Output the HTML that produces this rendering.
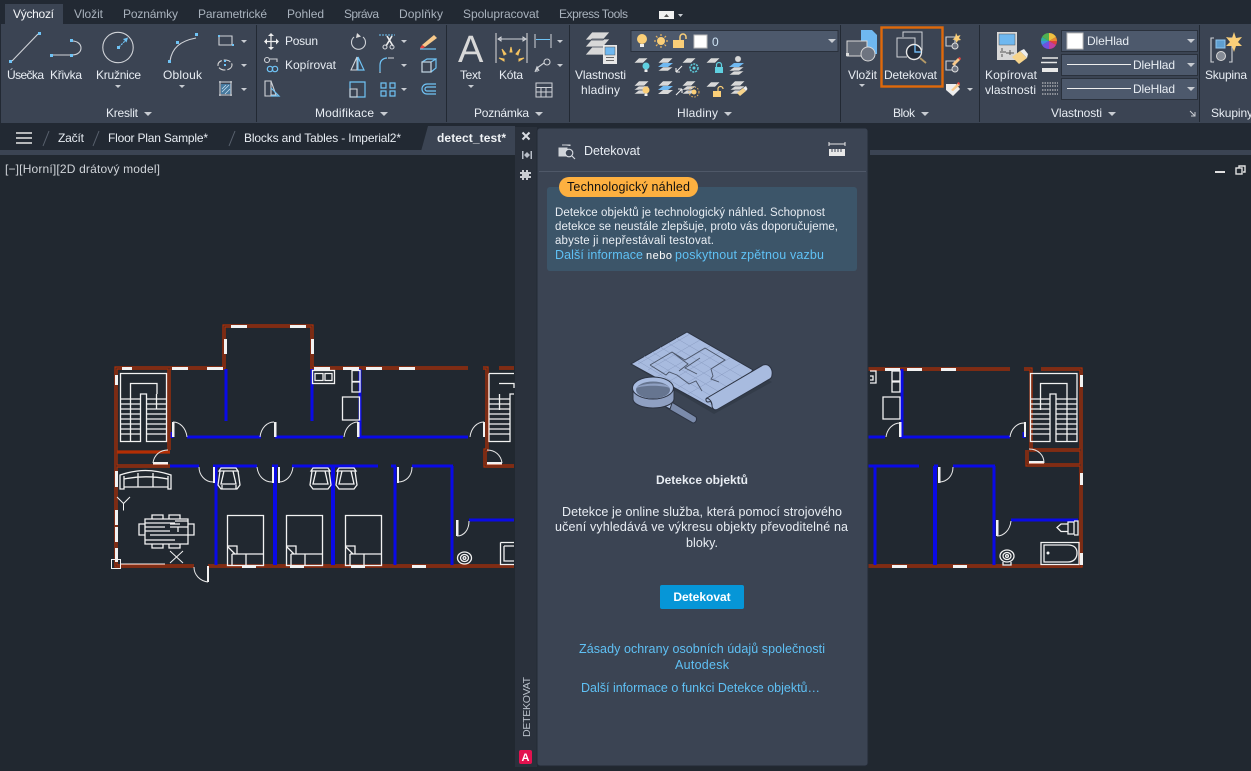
<!DOCTYPE html>
<html><head><meta charset="utf-8"><title>AutoCAD</title>
<style>
html,body{margin:0;padding:0;width:1251px;height:771px;overflow:hidden;background:#212830}
svg{display:block;font-family:"Liberation Sans",sans-serif}
text{font-size:12px;fill:#e8edf3}
.t{fill:#a9b2bd}
.l{fill:#5fc1f5;font-size:12.5px}
.i{fill:none;stroke:#d0d3d8;stroke-width:1.1}
.b{fill:none;stroke:#6fc3f5;stroke-width:1.2}
.a{fill:#c8ccd2}
.s{fill:#6fc3f5}
.d{fill:none;stroke:#e8e8e8;stroke-width:1}
.m{font-size:12.5px}
.n{font-size:11.5px}
</style></head><body>
<svg width="1251" height="771" viewBox="0 0 1251 771" xmlns="http://www.w3.org/2000/svg">
<rect width="1251" height="771" fill="#212830"/>
<rect width="1251" height="24" fill="#222933"/>
<rect y="24" width="1251" height="99" fill="#3b4453"/>
<rect y="123" width="1251" height="27" fill="#222933"/>
<rect y="150" width="423" height="5" fill="#3b4453"/>
<rect x="870" y="150" width="381" height="5" fill="#3b4453"/>
<!-- main tabs -->
<rect x="5" y="4" width="58" height="20" fill="#3b4453"/>
<text x="13" y="18" textLength="41" style="fill:#f4f6f8">Výchozí</text>
<text class="t" x="74" y="18" textLength="29">Vložit</text>
<text class="t" x="123" y="18" textLength="55">Poznámky</text>
<text class="t" x="198" y="18" textLength="69">Parametrické</text>
<text class="t" x="287" y="18" textLength="37">Pohled</text>
<text class="t" x="344" y="18" textLength="35">Správa</text>
<text class="t" x="399" y="18" textLength="44">Doplňky</text>
<text class="t" x="463" y="18" textLength="76">Spolupracovat</text>
<text class="t" x="559" y="18" textLength="69">Express Tools</text>
<rect x="659" y="11" width="15" height="8" fill="#f0f0f0"/><path d="M664 17l2.500-3 2.500 3z" fill="#555"/><path d="M678 14h5l-2.500 3z" class="a"/>
<!-- separators -->
<g fill="#222933"><rect x="256" y="25" width="1" height="97"/><rect x="446" y="25" width="1" height="97"/><rect x="569" y="25" width="1" height="97"/><rect x="840" y="25" width="1" height="97"/><rect x="979" y="25" width="1" height="97"/><rect x="1199" y="25" width="1" height="97"/></g>
<rect x="0" y="24" width="1" height="99" fill="#222933"/>
<!-- Kreslit -->
<path d="M12 61L38 34" class="i"/><rect x="9" y="60" width="3" height="3" class="s"/><rect x="38" y="32" width="3" height="3" class="s"/>
<path d="M53 55H71M72 41c12 0 12 14 0 14" class="i"/><rect x="50" y="54" width="3" height="3" class="s"/><rect x="70" y="54" width="3" height="3" class="s"/><rect x="70" y="39" width="3" height="3" class="s"/>
<circle cx="118" cy="47.500" r="15.200" class="i"/><path d="M119 47l8-8" stroke="#6fc3f5" stroke-width="1.200" fill="none" stroke-dasharray="2 1"/><path d="M128 37.500l-5 1.500 3.500 3.500z" class="s"/><rect x="117" y="46" width="3" height="3" class="s"/>
<path d="M170 61c2-13 10-20 26-23" class="i"/><rect x="168" y="60" width="3" height="3" class="s"/><rect x="176" y="41" width="3" height="3" class="s"/><rect x="195" y="33" width="3" height="3" class="s"/>
<text x="7" y="79" textLength="37">Úsečka</text><text x="50" y="79" textLength="32">Křivka</text><text x="96" y="79" textLength="45">Kružnice</text><text x="163" y="79" textLength="39">Oblouk</text>
<path d="M115 85h6l-3 3zM179 85h6l-3 3z" class="a"/>
<path d="M219 36h13v9h-13z" class="i"/><rect x="218" y="35" width="2" height="2" class="s"/><rect x="232" y="44" width="2" height="2" class="s"/>
<ellipse cx="225" cy="65" rx="7" ry="5" fill="none" stroke="#d8d8d8" stroke-width="1.100" stroke-dasharray="7 2"/><rect x="224" y="60" width="2" height="2" class="s"/><rect x="224" y="64" width="2" height="2" class="s"/>
<rect x="221" y="84" width="10" height="10" fill="#4f9cd0" opacity=".6"/><path d="M222 92l7-7M222 89l4-4M225 94l5-5" stroke="#cfe4f5" stroke-width=".7"/><path d="M219 82h13M219 95h13M220 81v15M231 81v15" class="i"/>
<path d="M241 40h6l-3 3zM241 64h6l-3 3zM241 88h6l-3 3z" class="a"/>
<text x="106" y="117" textLength="32">Kreslit</text><path d="M144 112h8l-4 4z" class="a"/>
<!-- Modifikace -->
<path d="M271 35v13M265 41.500h13" stroke="#eee" stroke-width="1.200"/><path d="M271 33l-3 3h6zM271 50l-3-3h6zM264 41.500l3-3v6zM279 41.500l-3-3v6z" fill="#eee"/>
<text x="285" y="45" textLength="33">Posun</text><text x="285" y="69" textLength="51">Kopírovat</text>
<circle cx="267" cy="60" r="2.500" class="i"/><circle cx="270" cy="69" r="2.700" class="b"/><circle cx="275" cy="69" r="2.700" class="b"/><path d="M270 59h7v3" class="i"/>
<path d="M265 81h6v15h-6zM271 81l5 14h-5" class="i"/><path d="M271 88l8 8h-8" class="b"/>
<path d="M354 37a7 7 0 1 0 9 0" class="i"/><path d="M357 33l4 3.500-5 1.500z" fill="#ddd"/>
<path d="M351 70l6-13v13z" class="i"/><path d="M358 57l6 13h-6z" class="b"/>
<path d="M350 82h15v15h-15z" class="b"/><path d="M350 89h7v8h-7z" class="i"/>
<path d="M379 35h16" stroke="#6fc3f5" stroke-width="1" stroke-dasharray="2 1"/><path d="M387 36l6 10M392 36l-6 10" stroke="#eee" stroke-width="1.600"/><circle cx="385" cy="47" r="2" class="i"/><circle cx="392" cy="47" r="2" class="i"/>
<path d="M380 72v-7c0-5 4-7 7-7" class="b"/><path d="M388 58h6M380 72v1" class="i"/>
<path d="M381 83h5v5h-5zM390 83h5v5h-5z" class="b"/><path d="M381 91h5v5h-5zM390 91h5v5h-5z" class="b"/>
<path d="M401 40h6l-3 3zM401 64h6l-3 3zM401 88h6l-3 3z" class="a"/>
<path d="M422 45l12-10 3 3-12 9z" fill="#f7c98b"/><path d="M422 45l3 2-3 2-2-1z" fill="#e9443e"/><path d="M420 49h16" class="b"/>
<path d="M422 62h9v10h-9zM431 62l5-3v9l-5 4M422 62l5-3h9" class="b"/><path d="M422 62h9v10h-9z" class="i"/>
<path d="M436 84h-9a5 5 0 0 0 0 10h9M436 87h-9a2 2 0 0 0 0 4h9" class="b"/>
<text x="315" y="117" textLength="59">Modifikace</text><path d="M380 112h8l-4 4z" class="a"/>
<!-- Poznámka -->
<text x="458" y="62" style="font-size:38px;fill:#d8d8d8" textLength="27">A</text>
<text x="460" y="79" textLength="21">Text</text><path d="M468 85h6l-3 3z" class="a"/>
<path d="M496 33v30M527 33v30" stroke="#ddd" stroke-width="1"/><path d="M498 39h28M498 39l3-2v4zM526 39l-3-2v4z" class="i" style="stroke-width:1"/>
<path d="M511 47l1 5-2 0zM502 49l4 5-2 1zM520 49l-4 5 2 1zM499 58l5 1v2zM524 58l-5 1v2z" fill="#f5c360" stroke="#f5c360"/>
<text x="499" y="79" textLength="24">Kóta</text>
<path d="M535 34v14M551 34v14" class="i" style="stroke-width:1"/><path d="M536 39.500h14" stroke="#6fc3f5"/>
<circle cx="547" cy="62" r="3" class="i"/><path d="M544 63l-7 5v4M535 72l2-5 2 4" class="i"/>
<path d="M536 83h16v14h-16zM536 87.500h16M536 92h16M541 87v10M546 87v10" class="i" style="stroke-width:1"/>
<path d="M557 40h6l-3 3zM557 64h6l-3 3z" class="a"/>
<text x="474" y="117" textLength="55">Poznámka</text><path d="M535 112h8l-4 4z" class="a"/>
<!-- Hladiny -->
<path d="M585 40l7-8h18l-7 8zM585 47l7-8h18l-7 8zM585 55l7-8h18l-7 8z" fill="#d8d8d8" stroke="#3b4453" stroke-width=".8"/>
<rect x="603" y="45" width="14" height="19" fill="#e8e8e8"/><rect x="605" y="47" width="10" height="8" fill="#6fb8f0" stroke="#555" stroke-width=".5"/><path d="M606 57.500h8M606 60.500h8" stroke="#666"/>
<text x="575" y="79" textLength="51">Vlastnosti</text><text x="581" y="94" textLength="39">hladiny</text>
<rect x="631" y="30.500" width="207" height="21" fill="#4d596c" stroke="#2a313c"/>
<circle cx="642" cy="39" r="5" fill="#fbcf78"/><rect x="640" y="44" width="4" height="3" fill="#eee"/>
<circle cx="661" cy="41" r="4" fill="#fbcf78"/><path d="M661 34v2M661 46v2M654 41h2M666 41h2M656 36l1.500 1.500M666 36l-1.500 1.500M656 46l1.500-1.500M666 46l-1.500-1.500" stroke="#e8b560" stroke-width="1.200"/>
<rect x="673" y="40" width="11" height="8" fill="#fbcf78"/><path d="M680 40v-3a3 3 0 0 1 6 0v2" fill="none" stroke="#fbcf78" stroke-width="1.500"/>
<rect x="694" y="35" width="13" height="13" fill="#fff" stroke="#bbb"/>
<text x="712" y="46" style="fill:#cfe4f5">0</text><path d="M828 39h8l-4 4z" class="a"/>
<g fill="#d8d8d8" stroke="#3b4453" stroke-width=".5">
<path d="M634 63l5-5h9l-5 5zM682 63l5-5h9l-5 5zM706 63l5-5h9l-5 5z"/>
<path d="M658 71l5-4h10l-5 4zM658 63l5-5h10l-5 5z"/>
<path d="M634 90l5-4h10l-5 4zM634 94l5-4h10l-5 4zM634 86l5-5h10l-5 5zM658 86l5-5h10l-5 5zM682 86l5-5h9l-5 5zM706 87l5-5h9l-5 5zM730 86l5-5h10l-5 5zM730 90l5-4h10l-5 4zM730 94l5-4h10l-5 4z"/>
<path d="M682 90l5-4h9l-5 4zM682 94l5-4h9l-5 4z"/>
<path d="M729 71l5-4h10l-5 4zM729 75l5-4h10l-5 4z"/><circle cx="738" cy="59" r="3.200"/>
</g>
<path d="M658 67l5-4h10l-5 4z" fill="#6fb8f0"/><path d="M658 90l5-4h10l-5 4z" fill="#6fb8f0"/><path d="M658 94l5-4h10l-5 4z" fill="#d8d8d8"/>
<path d="M729 67l5-4h10l-5 4z" fill="#6fb8f0"/>
<circle cx="646" cy="66" r="3.500" fill="#5fd0e0"/><rect x="644.500" y="69.500" width="3" height="2.500" fill="#eee"/>
<path d="M676 72l6-6M676 72h4M676 72v-4" stroke="#eee" stroke-width="1.100" fill="none"/>
<circle cx="694" cy="68" r="4" fill="none" stroke="#5fd0e0" stroke-width="1.500" stroke-dasharray="2 1"/><circle cx="694" cy="68" r="1.500" fill="#5fd0e0"/>
<rect x="715" y="67" width="8" height="6" fill="#5fd0e0"/><path d="M716.500 67v-2a2.500 2.500 0 0 1 5 0v2" fill="none" stroke="#5fd0e0" stroke-width="1.200"/>
<circle cx="646" cy="90" r="3.500" fill="#fbcf78"/><rect x="644.500" y="93.500" width="3" height="2.500" fill="#eee"/>
<path d="M676 95l6-6M682 89h-4M682 89v4" stroke="#eee" stroke-width="1.100" fill="none"/>
<circle cx="694" cy="92" r="2.500" fill="#fbcf78"/><circle cx="694" cy="92" r="5" fill="none" stroke="#e8b560" stroke-dasharray="1.500 1.500"/>
<rect x="713" y="91" width="8" height="6" fill="#fbcf78"/><path d="M718 91v-2a2.500 2.500 0 0 1 5 0" fill="none" stroke="#fbcf78" stroke-width="1.200"/>
<path d="M737 93l6-5 3 3-6 5z" fill="#f7d48b"/><path d="M743 88l3-2 1.500 3-1.500 2z" fill="#eee"/>
<text x="677" y="117" textLength="41">Hladiny</text><path d="M724 112h8l-4 4z" class="a"/>
<!-- Blok -->
<path d="M861 30h11l5 5v19h-16z" fill="#6fb8f0"/>
<rect x="847" y="41" width="20" height="15" fill="#5f6672" stroke="#d8d8d8"/><rect x="846" y="53" width="3" height="3" fill="#ddd"/>
<circle cx="868" cy="54" r="7" fill="#6e7480" stroke="#d8d8d8"/>
<text x="848" y="79" textLength="29">Vložit</text><path d="M859 84h6l-3 3z" class="a"/>
<rect x="881.500" y="27.500" width="61" height="59" fill="none" stroke="#e0690a" stroke-width="2.400"/>
<path d="M903 37v-5h19v18h-3" class="i" style="stroke-width:1"/><path d="M907 57h-10v-19h18v6" class="i" style="stroke-width:1"/>
<circle cx="914" cy="52" r="7.500" fill="#232b38" stroke="#e8e8e8" stroke-width="1.400"/><path d="M915 45v7h6" stroke="#6fb8f0" stroke-width="1.400" fill="none"/>
<path d="M920 58l6 5" stroke="#b59a66" stroke-width="1.800"/>
<text x="884" y="79" textLength="53">Detekovat</text>
<path d="M946 37h9v9h-9z" class="i"/><circle cx="955" cy="46" r="3" fill="#6e7480" stroke="#ddd"/><path d="M956 33l1.500 3 3-1-1.500 3 2 2-3 .5-1.500 2.500-1-3-3-.5 2.500-2z" fill="#fbcf78"/>
<path d="M946 61h9v9h-9z" class="i"/><circle cx="955" cy="69" r="3" fill="#6e7480" stroke="#ddd"/><path d="M952 64l6-6 2 2-6 6z" fill="#f7c98b"/><path d="M958 58l2-1 1 2-1 1z" fill="#e9443e"/>
<path d="M946 84h10l4 5-7 7-7-6z" fill="#eee"/><path d="M951 90l7-7 2 2-7 6z" fill="#f7c98b"/><path d="M957 83l2-1 1 2-1 1z" fill="#e9443e"/>
<path d="M967 88h6l-3 3z" class="a"/>
<text x="893" y="117" textLength="22">Blok</text><path d="M921 112h8l-4 4z" class="a"/>
<!-- Vlastnosti -->
<rect x="997" y="32" width="20" height="28" fill="#d8d8d8"/><rect x="999" y="34" width="16" height="11" fill="#6fb8f0" stroke="#555" stroke-width=".5"/><path d="M1002 48v3M1002 54v3M1010 50v5M1000 52h6M1006 53h8" stroke="#555"/>
<path d="M1012 57l8-6 7 7-8 6z" fill="#f7d48b"/><path d="M1020 51l4-2 4 5-1 4z" fill="#eee"/>
<text x="985" y="79" textLength="52">Kopírovat</text><text x="985" y="94" textLength="51">vlastnosti</text>
<path d="M1049 41V33a8 8 0 0 1 7 4z" fill="#f0c040"/><path d="M1049 41l7-4a8 8 0 0 1 1 4z" fill="#e88a30"/><path d="M1049 41h8a8 8 0 0 1-1 4z" fill="#e04040"/><path d="M1049 41l7 4a8 8 0 0 1-7 4z" fill="#c040a0"/><path d="M1049 41v8a8 8 0 0 1-7-4z" fill="#7050e0"/><path d="M1049 41l-7 4a8 8 0 0 1-1-4z" fill="#4090e0"/><path d="M1049 41h-8a8 8 0 0 1 1-4z" fill="#30b0a0"/><path d="M1049 41l-7-4a8 8 0 0 1 7-4z" fill="#50b050"/>
<path d="M1042 58h16M1041 62.500h16" stroke="#e8e8e8" stroke-width="1.500"/><path d="M1042 68h16v4h-16z" fill="#e8e8e8"/>
<path d="M1042 83h16M1042 86h16M1042 90h16M1042 94h16" stroke="#d8d8d8" stroke-dasharray="1.500 1" stroke-width="1"/>
<rect x="1061.500" y="30.500" width="136" height="21" fill="#4d596c" stroke="#2a313c"/>
<rect x="1067" y="33" width="16" height="16" fill="#fff" stroke="#bbb"/>
<text x="1087" y="45" textLength="42">DleHlad</text><path d="M1187 39h8l-4 4z" class="a"/>
<rect x="1061.500" y="54.500" width="136" height="21" fill="#4d596c" stroke="#2a313c"/>
<path d="M1067 64.500h64" stroke="#eee"/><text x="1133" y="69" textLength="42">DleHlad</text><path d="M1187 63h8l-4 4z" class="a"/>
<rect x="1061.500" y="78.500" width="136" height="21" fill="#4d596c" stroke="#2a313c"/>
<path d="M1067 88.500h64" stroke="#eee"/><text x="1133" y="93" textLength="42">DleHlad</text><path d="M1187 87h8l-4 4z" class="a"/>
<text x="1051" y="117" textLength="51">Vlastnosti</text><path d="M1108 112h8l-4 4z" class="a"/>
<path d="M1190 111l5 5M1195 112v4h-4" stroke="#c8ccd2" fill="none"/>
<!-- Skupina -->
<path d="M1214 38h-3v24h3M1229 38h3v24h-3" class="i"/>
<rect x="1216" y="40" width="9" height="8" fill="#5f9fd0" stroke="#8fc5ee"/>
<circle cx="1221" cy="56" r="4.500" fill="#858b95" stroke="#d8d8d8"/>
<path d="M1234 32l2 6 6-1-4 5 4 4-6 0-2 6-2-6-6 0 4-4-4-5 6 1z" fill="#fbcf78"/>
<text x="1205" y="79" textLength="42">Skupina</text><text x="1211" y="117" textLength="42">Skupiny</text>
<!-- doc tabs -->
<path d="M16 133h16M16 138h16M16 143h16" stroke="#e8e8e8" stroke-width="1.600"/>
<path d="M43 146l6-15M93 146l6-15M229 146l6-15" stroke="#59616e"/>
<text x="58" y="142" textLength="26">Začít</text>
<text x="108" y="142" textLength="100">Floor Plan Sample*</text>
<text x="244" y="142" textLength="157">Blocks and Tables - Imperial2*</text>
<path d="M420 155l8-29h87v29z" fill="#3b4453"/>
<text x="437" y="142" textLength="69" style="font-weight:bold;fill:#f0f3f6">detect_test*</text>
<text x="5" y="173" textLength="155" style="fill:#d0d4d9">[−][Horní][2D drátový model]</text>
<path d="M1215 172h10" stroke="#e0e0e0" stroke-width="2"/><path d="M1239 168v-2h6v6h-2" stroke="#e0e0e0" fill="none" stroke-width="1.400"/><rect x="1236" y="168" width="6" height="6" fill="none" stroke="#e0e0e0" stroke-width="1.400"/>

<!-- FLOOR PLAN -->
<path fill="none" stroke="#b42e04" stroke-width="3.200" d="M169 368H116V566H194M208 566H514M169 368V450M116 452H170M116 466H170M169 368H224V326H312V368H468M483 368H487V450H485V466H514M499 368H514M860 369H1010M1024 369H1031V450H1081M1041 369H1081V566H860M1027 450V465H1081"/>
<path fill="none" stroke="#2b2a2e" stroke-width=".8" d="M169 368H116V566H194M208 566H514M169 368V450M116 466H170M169 368H224V326H312V368H468M483 368H487V450H485V466H514M499 368H514M860 369H1010M1024 369H1031V450H1081M1041 369H1081V566H860M1027 450V465H1081"/>
<!-- blue -->
<path fill="none" stroke="#0a0ae6" stroke-width="3" d="M226 369V421M312 369V421M360 369V437M187 437H261M275 437H343M358 437H468M172 432V438M170 466H199M213 466H257M272 466H278M292 466H378M391 466H396M412 466H453M216 466V565M395 466V565M452 466V565M469 520H514M902 369V437M900 437H1010M860 437H885M1024 432V438M860 466H919M934 466H938M953 466H995M875 466V565M994 466V565M1011 520H1078"/>
<path fill="none" stroke="#0a0ae6" stroke-width="4" d="M275 466V565M333 466V565M935 466V565"/>
<!-- windows -->
<g fill="#f2f2f2">
<rect x="122" y="367" width="10" height="3"/><rect x="172" y="367" width="16" height="3"/><rect x="207" y="367" width="16" height="3"/>
<rect x="231" y="325" width="16" height="3"/><rect x="290" y="325" width="16" height="3"/>
<rect x="224" y="339" width="3" height="15"/><rect x="311" y="339" width="3" height="15"/>
<rect x="314" y="367" width="16" height="3"/><rect x="343" y="367" width="16" height="3"/><rect x="366" y="367" width="16" height="3"/><rect x="399" y="367" width="16" height="3"/>
<rect x="115" y="375" width="3" height="10"/><rect x="115" y="471" width="3" height="16"/><rect x="115" y="510" width="3" height="15"/><rect x="115" y="527" width="3" height="15"/><rect x="115" y="548" width="3" height="14"/>
<rect x="242" y="565" width="14" height="3"/><rect x="290" y="565" width="14" height="3"/><rect x="351" y="565" width="14" height="3"/><rect x="412" y="565" width="14" height="3"/>
<rect x="885" y="368" width="15" height="3"/><rect x="907" y="368" width="15" height="3"/><rect x="941" y="368" width="15" height="3"/>
<rect x="1080" y="375" width="3" height="12"/><rect x="1080" y="473" width="3" height="12"/><rect x="1080" y="553" width="3" height="12"/>
<rect x="892" y="565" width="15" height="3"/><rect x="953" y="565" width="14" height="3"/>
<!-- door leaves -->
<rect x="172" y="422" width="2.500" height="15"/><rect x="274" y="422" width="2.500" height="15"/><rect x="357" y="422" width="2.500" height="15"/><rect x="483" y="422" width="2" height="15"/>
<rect x="153" y="462" width="15" height="2.500"/><rect x="487" y="462" width="15" height="2.500"/>
<rect x="207" y="566" width="2" height="16"/><rect x="1024" y="422" width="2" height="15"/><rect x="1029" y="461" width="15" height="2.500"/>
<rect x="899" y="422" width="2.500" height="15"/>
<rect x="938" y="467" width="2.500" height="16"/><rect x="456" y="520" width="2.500" height="16"/><rect x="996" y="520" width="2.500" height="16"/>
<rect x="213" y="467" width="2" height="16"/><rect x="272" y="467" width="2" height="16"/><rect x="278" y="467" width="2" height="16"/>
<rect x="397" y="467" width="2" height="16"/>
</g>
<!-- door arcs -->
<path fill="none" stroke="#e8e8e8" stroke-width="1" d="M173 422c7 0 13 6 14 15M274 422c-7 0-13 6-14 15M358 422c-7 0-13 6-14 15M484 422c-7 0-13 6-14 15M168 450c-8 0-14 5-15 13M487 450c8 0 14 5 15 13M199 467c0 8 6 15 14 15M272 482c-8 0-14-6-15-15M279 482c7 0 13-6 14-15M398 482c8 0 14-6 14-15M194 567c0 8 6 14 14 15M1024 423c-7 0-13 6-14 14M900 423c-7 0-13 6-14 14M1029 449c9 0 15 6 15 14M939 482c8 0 14-6 14-15M457 536c7 0 12-6 12-15M997 536c7 0 13-6 14-15"/>
<g fill="none" stroke="#f2f2f2" stroke-width="1.300">
<path d="M120.500 373.500H166.500V441.500H146.500V394H140.500V441.500H120.500ZM130.500 394V383.500H157V394"/>
<path d="M120 399H140M120 404H140M120 409H140M120 414H140M120 419H140M120 424H140M120 429H140M120 434H140M146 399H166M146 404H166M146 409H166M146 414H166M146 419H166M146 424H166M146 429H166M146 434H166M130.500 394V441M156.500 394V409"/>
<path d="M489 373.500H514M489 373.500V441.500H510V394H514M499 383.500H514V388M489 399H510M489 404H510M489 409H510M489 414H510M489 419H510M489 424H510M489 429H510M489 434H510M499.500 394V410"/>
<path d="M1030.500 373.500H1077V441.500H1056V394H1050V441.500H1030.500ZM1040.500 394V383.500H1067V394M1030 399H1050M1030 404H1050M1030 409H1050M1030 414H1050M1030 419H1050M1030 424H1050M1030 429H1050M1030 434H1050M1056 399H1077M1056 404H1077M1056 409H1077M1056 414H1077M1056 419H1077M1056 424H1077M1056 429H1077M1056 434H1077M1040.500 394V410M1067 394V441"/>
<!-- kitchen -->
<rect x="312.500" y="370.500" width="22" height="13"/><path d="M315 373.500h8v7h-8zM325 373.500h7v7h-7z"/>
<path d="M352 370.500h8v11h-8zM352 382h8v10h-8zM342.500 397h17v23h-17z"/>
<path d="M870 371h6v12h-6M870 376h3v4h-3M892 371h8v10h-8zM892 382h8v10h-8zM883 397h17v22h-17z"/>
<!-- sofa -->
<path d="M120 475v14h4v-2h44v2h3v-14c-18-6-33-6-51 0zM124 476v11M124 479c15-3 29-3 44 0M168 476v11M138 473v14M153 473v14"/>
<!-- table -->
<path d="M145 519h43v25h-43zM145 523h30M145 527h20M170 527h18M145 531h25M150 535h38M145 540h30M175 521h13M170 524h10M178 527v5"/>
<path d="M152 519v-4h11v4M169 519v-4h11v4M152 544v4h11v-4M169 544v4h11v-4M145 524h-6v11h6M188 524h6v11h-6"/>
<!-- beds -->
<path d="M227.500 515.500H263.500V565.500H227.500ZM227.500 546H237V554M232 554H263M232 554V565M246 554V565M228 547l7 7"/>
<path d="M286.500 515.500H322.500V565.500H286.500ZM286.500 546H296V554M291 554H322M291 554V565M305 554V565M287 547l7 7"/>
<path d="M345.500 515.500H381.500V565.500H345.500ZM345.500 546H355V554M350 554H381M350 554V565M364 554V565M346 547l7 7"/>
<!-- chairs -->
<path d="M221 468h15l2 3h-19zM220 471l-2 14 3 4h16l3-4-2-14M224 471l-3 13h15l-3-13M222 485v4M236 485v4"/>
<path d="M313 468h15l2 3h-19zM312 471l-2 14 3 4h15l3-4-2-14M316 471l-3 13h15l-3-13"/>
<path d="M339 468h15l2 3h-19zM338 471l-2 14 3 4h15l3-4-2-14M342 471l-3 13h15l-3-13"/>
<!-- toilet / tub -->
<ellipse cx="464.500" cy="558" rx="7" ry="6"/><ellipse cx="464.500" cy="558" rx="4" ry="3.500"/><circle cx="464.500" cy="558" r="1.400"/>
<ellipse cx="1007" cy="556" rx="7" ry="6"/><ellipse cx="1007" cy="556" rx="4" ry="3.500"/><circle cx="1007" cy="556" r="1.400"/><path d="M1003 562v3h8v-3"/>
<path d="M500.500 542.500H514M500.500 542.500V564.500H514M504 546H514M504 546V561H514"/>
<path d="M1041 542.500H1079V564.500H1041ZM1044 545H1068c6 0 9 3 9 8s-3 9-9 9H1044Z"/>
<path d="M1074 525v-3h-6v12h6v-3zM1068 524h-7l-4 3.500 4 4h7M1074 521h4v14h-4"/>
<!-- UCS -->
<path d="M111.500 559.500h9v9h-9zM121 564H165M170 551l13 12M183 551l-13 12M117 497l6.500 6.500 6.500-6.500M123.500 503.500v7" stroke-width="1"/>
</g>
<circle cx="1048" cy="553" r="1.500" fill="#f2f2f2"/>

<!-- DETEKOVAT PANEL -->
<rect x="515" y="127" width="22" height="640" fill="#2a313c"/>
<rect x="537" y="128" width="331" height="638" rx="3" fill="#3b4453" stroke="#232a35"/>
<path d="M522.500 132.500l7 7M529.500 132.500l-7 7" stroke="#d8dce2" stroke-width="2"/>
<path d="M522 151h1.500v8H522zM530.500 151h1.500v8h-1.500zM524 155l3-3v6zM530 155l-3-3v6z" fill="#b8bec8"/>
<path d="M522 170h2v2h2v-2h2v2h3v2h-2v2h2v2h-3v2h-2v-2h-2v2h-2v-2h-2v-2h2v-2h-2v-2h2z" fill="#c8ccd2"/>
<!-- strip text -->
<text transform="translate(530,737) rotate(-90)" textLength="60" style="fill:#b9c0ca;font-size:10.500px">DETEKOVAT</text>
<rect x="519" y="750" width="13" height="14" rx="2" fill="#e3124f"/>
<text x="521.500" y="761" style="font-size:11px;font-weight:bold;fill:#fff">A</text>
<!-- header -->
<path d="M562 145h8v1M559 148h8v8h-8z" fill="#d0d4d9" stroke="#d0d4d9"/>
<circle cx="569" cy="153" r="3.800" fill="#3b4453" stroke="#d8dce2" stroke-width="1.100"/><path d="M572 156l3 3" stroke="#d8dce2" stroke-width="1.100"/>
<text class="m" x="584" y="155" textLength="56">Detekovat</text>
<path d="M829 144h16M829 142v4M845 142v4" stroke="#e8e8e8"/><rect x="829" y="149" width="16" height="7" fill="#e8e8e8"/><path d="M832 149v3M835 149v3M838 149v3M841 149v3" stroke="#3b4453"/>
<rect x="539" y="171" width="327" height="1" fill="#4f5868"/>
<rect x="547" y="187" width="310" height="84" rx="3" fill="#3c5569"/>
<rect x="559" y="177" width="139" height="20" rx="10" fill="#fdb040"/>
<text class="m" x="567" y="191" textLength="123" style="fill:#111">Technologický náhled</text>
<text class="n" x="555" y="216" textLength="270">Detekce objektů je technologický náhled. Schopnost</text>
<text class="n" x="555" y="230" textLength="283">detekce se neustále zlepšuje, proto vás doporučujeme,</text>
<text class="n" x="555" y="244" textLength="159">abyste ji nepřestávali testovat.</text>
<text class="l" x="555" y="259" textLength="88">Další informace</text>
<text x="646" y="259" textLength="26" style="font-size:11px;fill:#fff">nebo</text>
<text class="l" x="675" y="259" textLength="149">poskytnout zpětnou vazbu</text>
<!-- illustration -->
<path d="M690 336l82 46-58 32-79-47z" fill="#2c3440" opacity=".5"/>
<path d="M687 332L631 364L715 410L753 370z" fill="#a8bbdf" stroke="#2c3342"/>
<g fill="none" stroke="#8a9cc2" stroke-width=".5">
<path d="M676 338l75 44M668 343l75 44M660 347l74 44M652 352l74 44M644 356l74 44M638 361l73 44M690 334l-52 30M700 340l-52 30M710 346l-52 30M720 352l-52 30M730 358l-52 30M740 364l-52 30"/>
</g>
<path d="M650 365l22-13 13 8 20-12 20 12-14 9 2 7-2 3 8 3M650 365l16 10 3-3 8 3 12 9 7-3 6 10M672 352l16 12-9 7M700 358l-15 10 12 6" fill="none" stroke="#4b5568" stroke-width=".9"/>
<path d="M707 398L763 365c6-2 10 4 9 10c0 3-2 4-4 5L718 409c-3 2-6 0-6-4 0-3-2-6-5-7z" fill="#a8bbdf" stroke="#2c3342"/>
<path d="M707 398c-2 1-1 4 1 4c2 0 3-2 4 3" fill="none" stroke="#2c3342"/>
<path d="M670 401l26 16a4 4 0 0 1-3 6l-26-15z" fill="#7b8bab" stroke="#2c3342"/>
<path d="M664 399l8 4-2 6-8-4z" fill="#a8bbdf" stroke="#2c3342"/>
<path d="M633 388v11c0 5 9 9 20 9s21-4 21-9v-11z" fill="#8fa0c2" stroke="#2c3342"/>
<ellipse cx="653" cy="388" rx="20.500" ry="11" fill="#a8bbdf" stroke="#2c3342"/>
<ellipse cx="653" cy="390" rx="17" ry="8.500" fill="#667590"/>
<path d="M636 388c4-5 30-7 34 0c-8-3-26-3-34 0z" fill="#8fa0c2"/>
<!-- body -->
<text x="702" y="484" text-anchor="middle" style="font-weight:bold">Detekce objektů</text>
<text class="m" x="562" y="516" textLength="280">Detekce je online služba, která pomocí strojového</text>
<text class="m" x="555" y="531" textLength="293">učení vyhledává ve výkresu objekty převoditelné na</text>
<text class="m" x="686" y="547" textLength="32">bloky.</text>
<rect x="660" y="585" width="84" height="24" rx="2" fill="#0696d7"/>
<text x="702" y="601" text-anchor="middle" style="font-weight:bold;fill:#fff">Detekovat</text>
<text class="l" x="579" y="653" textLength="246">Zásady ochrany osobních údajů společnosti</text>
<text class="l" x="675" y="669" textLength="54">Autodesk</text>
<text class="l" x="581" y="692" textLength="239">Další informace o funkci Detekce objektů…</text>
</svg>
</body></html>
